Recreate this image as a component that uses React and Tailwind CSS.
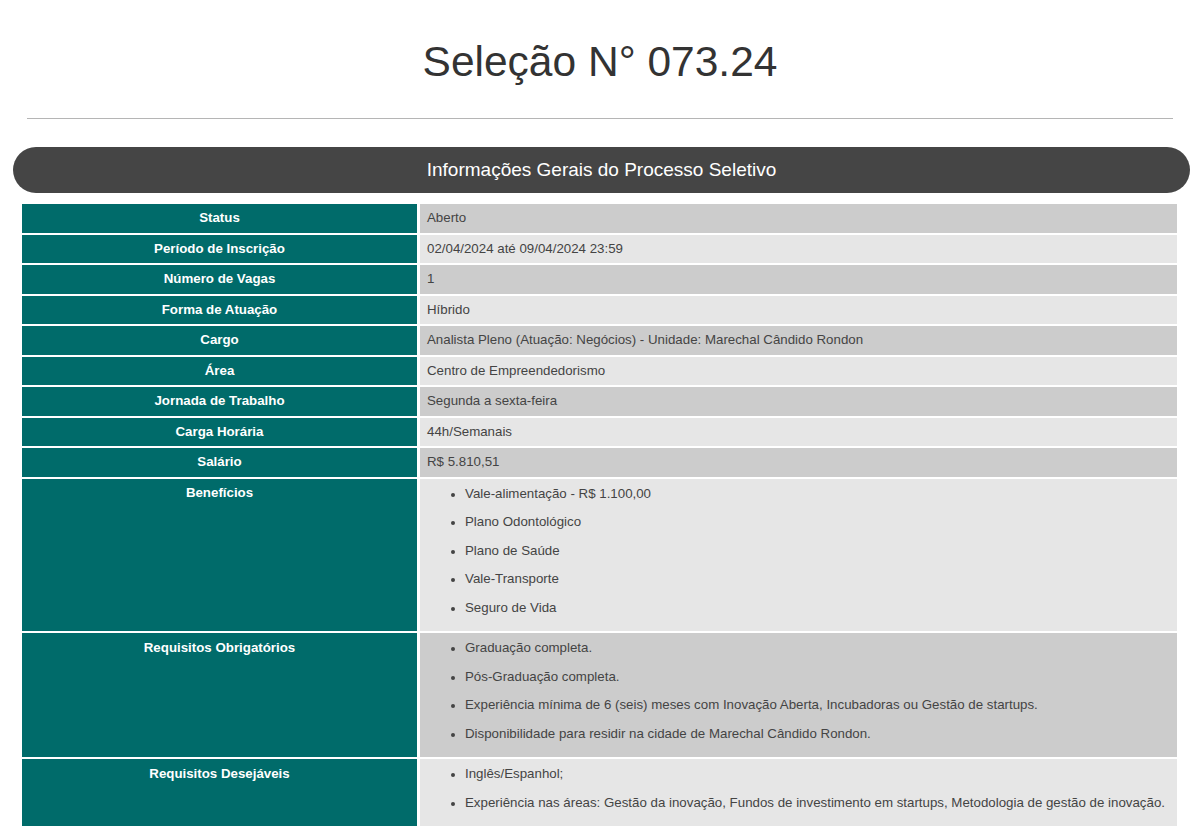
import React from "react";

const rows = [
  ["Status", "Aberto"],
  ["Período de Inscrição", "02/04/2024 até 09/04/2024 23:59"],
  ["Número de Vagas", "1"],
  ["Forma de Atuação", "Híbrido"],
  ["Cargo", "Analista Pleno (Atuação: Negócios) - Unidade: Marechal Cândido Rondon"],
  ["Área", "Centro de Empreendedorismo"],
  ["Jornada de Trabalho", "Segunda a sexta-feira"],
  ["Carga Horária", "44h/Semanais"],
  ["Salário", "R$ 5.810,51"],
  [
    "Benefícios",
    [
      "Vale-alimentação - R$ 1.100,00",
      "Plano Odontológico",
      "Plano de Saúde",
      "Vale-Transporte",
      "Seguro de Vida",
    ],
  ],
  [
    "Requisitos Obrigatórios",
    [
      "Graduação completa.",
      "Pós-Graduação completa.",
      "Experiência mínima de 6 (seis) meses com Inovação Aberta, Incubadoras ou Gestão de startups.",
      "Disponibilidade para residir na cidade de Marechal Cândido Rondon.",
    ],
  ],
  [
    "Requisitos Desejáveis",
    [
      "Inglês/Espanhol;",
      "Experiência nas áreas: Gestão da inovação, Fundos de investimento em startups, Metodologia de gestão de inovação.",
    ],
  ],
];

export default function App() {
  return (
    <div
      className="w-[1200px] min-h-[827px] bg-white overflow-hidden"
      style={{ fontFamily: '"Liberation Sans", Arial, sans-serif' }}
    >
      <h1 className="pt-[37px] text-center text-[42.5px] leading-[50px] text-[#333333] font-normal">
        Seleção N° 073.24
      </h1>
      <div className="mx-[27px] mt-[31px] h-px bg-[#b5b5b5]" />
      <div className="ml-[13px] mr-[10px] mt-[28px] h-[46px] rounded-full bg-[#454545] flex items-center justify-center text-white text-[19px]">
        Informações Gerais do Processo Seletivo
      </div>
      <div className="ml-[22px] mr-[23px] mt-[11px] grid grid-cols-[395px_1fr] gap-x-[3px] gap-y-[2px]">
        {rows.map(([label, value], i) => {
          const bg = i % 2 === 0 ? "bg-[#cccccc]" : "bg-[#e6e6e6]";
          const isList = Array.isArray(value);
          return (
            <React.Fragment key={label}>
              <div
                className={`bg-[#006b6a] text-white font-bold text-[13.3px] text-center ${
                  isList ? "" : "flex items-center justify-center"
                } min-h-[28.5px]`}
              >
                {isList ? (
                  <div className="h-[29px] flex items-center justify-center">{label}</div>
                ) : (
                  label
                )}
              </div>
              <div
                className={`${bg} text-[#444444] text-[13.3px] px-[7px] ${
                  isList ? "pb-[9px] pt-[1px]" : "flex items-center"
                } min-h-[28.5px]`}
              >
                {isList ? (
                  <ul className="list-disc pl-[38px]">
                    {value.map((v) => (
                      <li key={v} className="h-[28.5px] leading-[28.5px] marker:text-[12px]">
                        {v}
                      </li>
                    ))}
                  </ul>
                ) : (
                  value
                )}
              </div>
            </React.Fragment>
          );
        })}
      </div>
    </div>
  );
}
